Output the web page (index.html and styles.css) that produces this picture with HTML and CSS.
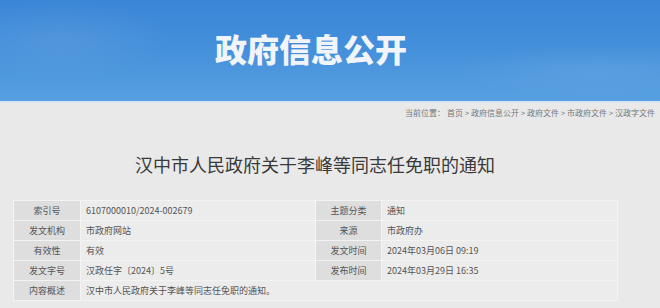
FILE: index.html
```html
<!DOCTYPE html>
<html lang="zh">
<head>
<meta charset="utf-8">
<link rel="stylesheet" href="styles.css">
</head>
<body>
<header class="banner">
  <div class="banner-waves"></div>
  <h1 class="banner-title">政府信息公开</h1>
</header>
<div class="banner-edge"></div>
<nav class="crumbs">当前位置： 首页 &gt; 政府信息公开 &gt; 政府文件 &gt; 市政府文件 &gt; 汉政字文件</nav>
<h2 class="doc-title">汉中市人民政府关于李峰等同志任免职的通知</h2>
<table class="meta">
  <colgroup><col class="c-l"><col class="c-v"><col class="c-l2"><col class="c-v2"></colgroup>
  <tr><th>索引号</th><td>6107000010/2024-002679</td><th>主题分类</th><td>通知</td></tr>
  <tr><th>发文机构</th><td>市政府网站</td><th>来源</th><td>市政府办</td></tr>
  <tr><th>有效性</th><td>有效</td><th>发文时间</th><td>2024年03月06日 09:19</td></tr>
  <tr><th>发文字号</th><td>汉政任字〔2024〕5号</td><th>发布时间</th><td>2024年03月29日 16:35</td></tr>
  <tr><th>内容概述</th><td colspan="3">汉中市人民政府关于李峰等同志任免职的通知。</td></tr>
</table>
</body>
</html>
```
FILE: styles.css
```css
html, body {
  margin: 0;
  padding: 0;
  background: #e9e9e9;
  font-family: "Noto Sans CJK SC", "Noto Sans", sans-serif;
  overflow: hidden;
}
.banner {
  position: relative;
  height: 101px;
  background: linear-gradient(180deg, #3a85d6 0%, #4590db 50%, #58a0e1 100%);
  overflow: hidden;
}
.banner-waves {
  position: absolute;
  inset: 0;
  background:
    radial-gradient(ellipse 160px 60px at 60px 40px, rgba(255,255,255,0.08), transparent 70%),
    radial-gradient(ellipse 220px 40px at 600px 70px, rgba(255,255,255,0.07), transparent 70%);
}
.banner-title {
  position: relative;
  margin: 0;
  padding: 32px 0 0 215px;
  font-size: 32px;
  line-height: 1;
  font-weight: 900;
  color: #f1f4f8;
  white-space: nowrap;
}
.banner-edge {
  height: 2px;
  background: #d6e4f1;
}
.crumbs {
  height: 20px;
  line-height: 20px;
  padding-right: 5px;
  text-align: right;
  font-size: 8px;
  color: #777;
  white-space: nowrap;
}
.doc-title {
  margin: 30px 0 0;
  height: 22px;
  line-height: 22px;
  text-align: center;
  padding-right: 30px;
  font-size: 18px;
  font-weight: 400;
  color: #3a3a3a;
}
.meta {
  margin: 25px 0 0 13px;
  width: 604px;
  border-collapse: collapse;
  table-layout: fixed;
  font-size: 9px;
  color: #555;
  border: 1px solid #dedede;
}
.c-l { width: 67px; }
.c-v { width: 235px; }
.c-l2 { width: 66px; }
.c-v2 { width: 236px; }
.meta th, .meta td {
  height: 19px;
  padding: 0;
  border: 1px solid #f3f3f3;
  white-space: nowrap;
}
.meta th {
  background: #dedede;
  font-weight: 400;
  text-align: center;
}
.meta td {
  background: #ececec;
  text-align: left;
  padding-left: 5px;
}
```
